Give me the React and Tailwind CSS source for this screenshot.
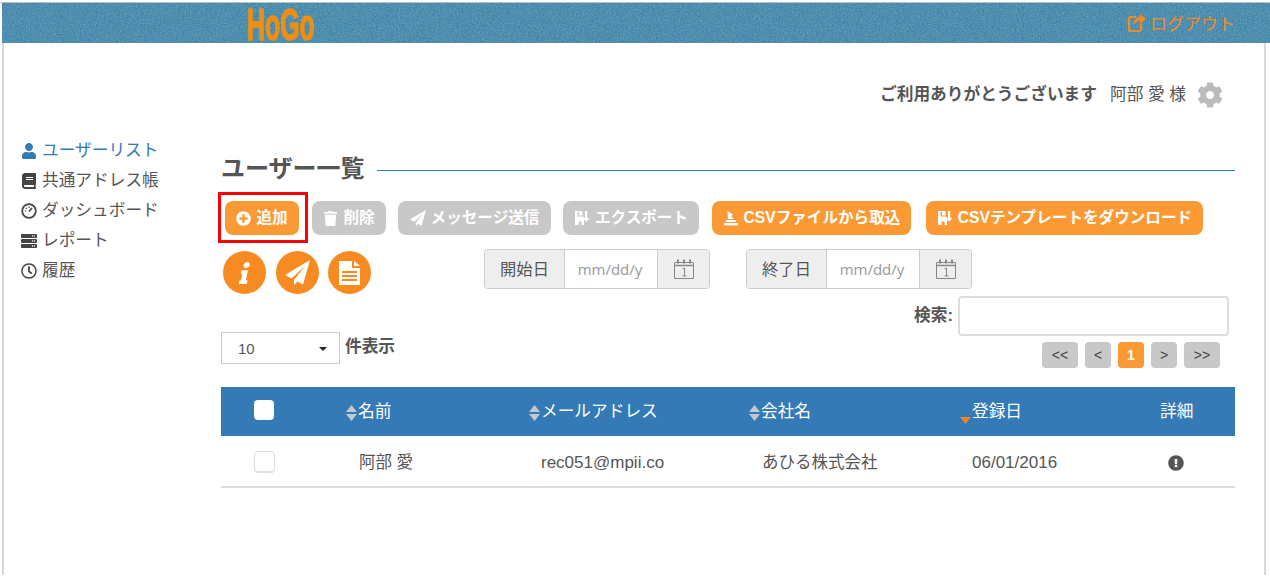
import React from 'react';
import {
    FaBook,
    FaCog,
    FaExclamationCircle,
    FaInfo,
    FaPlusCircle,
    FaRegClock,
    FaServer,
    FaTrash,
    FaUser,
} from 'react-icons/fa';

function Gauge({ className }) {
    return (
        <svg viewBox="0 0 16 16" className={className} fill="none" stroke="currentColor">
            <circle cx="8" cy="8" r="6.8" strokeWidth="1.8" />
            <path d="M8 8.5 L11 5" strokeWidth="1.6" />
            <path d="M4 8h1.2M8 3.8v1.2M5 5l.8.8" strokeWidth="1.2" />
        </svg>
    );
}

function LogoutIcon({ className }) {
    return (
        <svg viewBox="0 0 20 20" className={className}>
            <path d="M14 11v5.500a1.500 1.500 0 0 1-1.500 1.500h-9A1.500 1.500 0 0 1 2 16.500v-11A1.500 1.500 0 0 1 3.500 4H9" fill="none" stroke="currentColor" strokeWidth="2.200" />
            <path d="M13 1l6 5-6 5V8C9.500 8 7.500 9.500 6.500 13 6 8 8.500 4.500 13 4z" fill="currentColor" />
        </svg>
    );
}

function PlaneIcon({ className }) {
    return (
        <svg viewBox="0 0 25 25" className={className} fill="currentColor">
            <path d="M25 0L0 15l6.500 3.500L20 6 9 20v5l3.500-3.500 5.500 3z" />
        </svg>
    );
}

function PageIcon({ className }) {
    return (
        <svg viewBox="0 0 21 24" className={className} fill="currentColor">
            <path d="M0 0h13v7h8v17H0zM3 10v2h15v-2zM3 14v2h15v-2zM3 18v2h15v-2z" fillRule="evenodd" />
            <path d="M15 0l6 5h-6z" />
        </svg>
    );
}

function ExportIcon({ className }) {
    return (
        <svg viewBox="0 0 16 16" className={className} fill="currentColor">
            <path d="M1 1h7.500v4.500H5V1.800H3.600v4.700h5.600L10 7.400V15H7.600v-3.500H4.600V15H1z" />
            <path d="M11 1h2.200v7H15.400l-3.300 4-3-4H11z" />
        </svg>
    );
}

function ImportIcon({ className }) {
    return (
        <svg viewBox="0 0 16 16" className={className} fill="currentColor">
            <path d="M4.500 1 L10 4.500 L8 6 L11 9 L5 9 Z" />
            <rect x="3" y="10" width="10" height="2" />
            <rect x="1" y="13" width="14" height="2.400" />
        </svg>
    );
}

function CalendarIcon() {
    return (
        <svg viewBox="0 0 22 22" className="h-[22px] w-[22px] text-[#888]" fill="none" stroke="currentColor">
            <path d="M1.500 4.500h19v16h-19z" />
            <path d="M1.500 7.500h19" strokeWidth="1.500" />
            <path d="M5 1.500v4M11 1.500v4M17 1.500v4" strokeWidth="2" />
            <path d="M9.500 11l2-1v8M9.500 18h4" />
        </svg>
    );
}

function SortIcon({ active }) {
    if (active) {
        return (
            <svg viewBox="0 0 11 16" className="mr-px inline-block h-4 w-[11px] shrink-0 translate-y-[3px] text-[#f58220]" fill="currentColor">
                <path d="M0 9h11l-5.500 7z" />
            </svg>
        );
    }
    return (
        <svg viewBox="0 0 11 16" className="mr-px inline-block h-4 w-[11px] shrink-0 text-[#c5c9ce]" fill="currentColor">
            <path d="M0 7L5.500 0 11 7zM0 9h11l-5.500 7z" />
        </svg>
    );
}

function ActionButton({ icon, label, color, className }) {
    return (
        <button className={`flex h-[34px] items-center justify-center gap-[5px] rounded-lg text-[15.600px] font-bold text-white ${color} ${className}`}>
            {icon}
            {label}
        </button>
    );
}

function DateGroup({ label, className }) {
    return (
        <div className={`flex h-10 w-[226px] rounded border border-[#ccc] text-[16.300px] ${className}`}>
            <div className="flex w-[79px] items-center justify-center rounded-l bg-[#eee] text-[#555]">{label}</div>
            <div className="flex w-[94px] items-center justify-center border-x border-[#ccc] pr-[2px] font-['Open_Sans'] text-[15px] text-[#999]">mm/dd/y</div>
            <div className="flex flex-1 items-center justify-center rounded-r bg-[#eee]">
                <CalendarIcon />
            </div>
        </div>
    );
}

function PageButton({ label, active, className }) {
    return (
        <button className={`flex h-[26px] items-center justify-center rounded text-[14px] ${active ? 'bg-[#fb9a35] font-bold text-white' : 'bg-[#c8c8c8] text-[#444]'} ${className}`}>
            {label}
        </button>
    );
}

const menu = [
    { icon: <FaUser className="h-4 w-4" />, label: 'ユーザーリスト', color: 'text-[#337ab7]' },
    { icon: <FaBook className="h-4 w-4" />, label: '共通アドレス帳', color: 'text-[#555]' },
    { icon: <Gauge className="h-4 w-4" />, label: 'ダッシュボード', color: 'text-[#555]' },
    { icon: <FaServer className="h-4 w-4" />, label: 'レポート', color: 'text-[#555]' },
    { icon: <FaRegClock className="h-4 w-4" />, label: '履歴', color: 'text-[#555]' },
];

export default function App() {
    return (
        <div className="flex h-[578px] w-[1270px] flex-col overflow-hidden bg-white pt-[2px] font-['Liberation_Sans','Noto_Sans_CJK_JP',sans-serif] text-[#555]">
            <div className="h-px shrink-0 bg-[#bdbdbd]" />
            <header className="relative ml-[2px] flex h-10 shrink-0 items-center bg-[#3a82a8]">
                <svg className="absolute inset-0 h-full w-full" aria-hidden="true">
                    <filter id="grain">
                        <feTurbulence type="fractalNoise" baseFrequency="0.7" numOctaves="3" seed="4" />
                        <feColorMatrix values="0 0 0 0 0.14  0 0 0 0 0.34  0 0 0 0 0.48  1.600 0 0 0 -0.350" />
                    </filter>
                    <rect width="100%" height="100%" filter="url(#grain)" />
                </svg>
                <div className="relative ml-[245px] mt-[4px] w-fit origin-left scale-x-[0.83] scale-y-[1.5] whitespace-nowrap text-[30px] leading-[34px] font-bold text-[#ee8f12] [-webkit-text-stroke:1px_#ee8f12]">HoGo</div>
                <div className="relative ml-auto mr-[35px] mt-[4px] flex items-center gap-[3px] text-[17px] text-[#f58a1f]">
                    <LogoutIcon className="-mt-[5px] h-[20px] w-[20px]" />
                    ログアウト
                </div>
            </header>
            <div className="mb-[3px] ml-[2px] mr-[4px] flex flex-1 flex-col border-x-2 border-[#d8d8d8]">
                <div className="flex h-[93px] shrink-0 items-start justify-end pr-[41px] pt-[37px]">
                    <span className="text-[16.700px] leading-[30px] font-bold">ご利用ありがとうございます</span>
                    <span className="ml-[13px] text-[16.700px] leading-[30px]">阿部 愛 様</span>
                    <FaCog className="ml-[11px] mt-[2px] h-[26px] w-[26px] text-[#bbb]" />
                </div>
                <div className="flex flex-1">
                    <nav className="w-[217px] shrink-0 pl-[17px]">
                        {menu.map((item) => (
                            <div key={item.label} className={`flex h-[30px] items-center gap-[5px] text-[16.700px] ${item.color}`}>
                                <span className={item.label === 'ユーザーリスト' ? 'text-[#337ab7]' : 'text-[#444]'}>{item.icon}</span>
                                {item.label}
                            </div>
                        ))}
                    </nav>
                    <main className="w-[1014px] shrink-0">
                        <div className="mt-4 flex items-center">
                            <h1 className="text-[24px] leading-[34px] font-bold">ユーザー一覧</h1>
                            <div className="ml-3 mt-[3px] h-px flex-1 bg-[#2a86a8]" />
                        </div>
                        <div className="relative mt-[15px] flex h-[34px] pl-1">
                            <div className="absolute -top-[9px] -left-[3px] h-[51px] w-[90px] border-[3.500px] border-[#f00]" />
                            <ActionButton color="bg-[#fb9a35]" className="w-[74px]" label="追加" icon={<FaPlusCircle className="h-[15px] w-[15px]" />} />
                            <ActionButton color="bg-[#c8c8c8]" className="ml-[13px] w-[74px]" label="削除" icon={<FaTrash className="h-[15px] w-[15px]" />} />
                            <ActionButton color="bg-[#c8c8c8]" className="ml-3 w-[153px]" label="メッセージ送信" icon={<PlaneIcon className="h-[16px] w-[16px]" />} />
                            <ActionButton color="bg-[#c8c8c8]" className="ml-3 w-[136px]" label="エクスポート" icon={<ExportIcon className="h-[16px] w-[16px]" />} />
                            <ActionButton color="bg-[#fb9a35]" className="ml-[13px] w-[199px]" label="CSVファイルから取込" icon={<ImportIcon className="h-[16px] w-[16px]" />} />
                            <ActionButton color="bg-[#fb9a35]" className="ml-[15px] w-[277px]" label="CSVテンプレートをダウンロード" icon={<ExportIcon className="h-[16px] w-[16px]" />} />
                        </div>
                        <div className="mt-[14px] flex">
                            <div className="mt-[2px] ml-[2px] flex h-[43px] w-[261px] gap-[9.500px]">
                                <span className="flex h-[43px] w-[43px] items-center justify-center rounded-full bg-[#f78b22] text-white"><FaInfo className="h-[22px] w-[22px] -skew-x-12" /></span>
                                <span className="flex h-[43px] w-[43px] items-center justify-center rounded-full bg-[#f78b22] text-white"><PlaneIcon className="h-[25px] w-[25px]" /></span>
                                <span className="flex h-[43px] w-[43px] items-center justify-center rounded-full bg-[#f78b22] text-white"><PageIcon className="h-[24px] w-[21px]" /></span>
                            </div>
                            <DateGroup label="開始日" />
                            <DateGroup label="終了日" className="ml-9" />
                        </div>
                        <div className="mt-[2px] flex justify-between">
                            <div className="flex items-start pt-[36px]">
                                <div className="flex h-8 w-[119px] items-center justify-between border border-[#ccc] pl-4 pr-[12px] pt-[2px] text-[15px]">
                                    10
                                    <span className="h-0 w-0 border-x-[4px] border-t-[4px] border-x-transparent border-t-[#222]" />
                                </div>
                                <span className="ml-[5px] text-[16.700px] leading-[29px] font-bold">件表示</span>
                            </div>
                            <div className="flex flex-col items-end pr-[6px]">
                                <div className="flex items-center gap-[5px]">
                                    <span className="self-start text-[16.700px] leading-[40px] font-bold">検索:</span>
                                    <div className="h-10 w-[271px] rounded border-2 border-[#ddd]" />
                                </div>
                                <div className="mt-[6px] mr-[9px] flex gap-[7px]">
                                    <PageButton label="<<" className="w-9" />
                                    <PageButton label="<" className="w-[26px]" />
                                    <PageButton label="1" active className="w-[26px]" />
                                    <PageButton label=">" className="w-[26px]" />
                                    <PageButton label=">>" className="w-9" />
                                </div>
                            </div>
                        </div>
                        <table className="mt-[19px] w-full table-fixed border-b-2 border-[#ddd] text-left">
                            <colgroup>
                                <col className="w-[125px]" />
                                <col className="w-[183px]" />
                                <col className="w-[220px]" />
                                <col className="w-[211px]" />
                                <col className="w-[170px]" />
                                <col />
                            </colgroup>
                            <thead>
                                <tr className="h-[49px] bg-[#337ab7] text-[16.700px] font-normal text-white">
                                    <th className="pl-[33px]"><div className="-mt-1 h-5 w-5 rounded bg-white" /></th>
                                    <th className="font-normal"><SortIcon />名前</th>
                                    <th className="font-normal"><SortIcon />メールアドレス</th>
                                    <th className="font-normal"><SortIcon />会社名</th>
                                    <th className="font-normal"><SortIcon active />登録日</th>
                                    <th className="pl-[30px] font-normal">詳細</th>
                                </tr>
                            </thead>
                            <tbody>
                                <tr className="h-[51px] text-[17px]">
                                    <td className="pl-[33px]"><div className="h-[21px] w-[21px] rounded border border-[#ddd] shadow-[0_1px_1px_#ddd]" /></td>
                                    <td className="pl-[13px] pt-[3px] text-[16.500px]">阿部 愛</td>
                                    <td className="pl-[12px] pt-[3px]">rec051@mpii.co</td>
                                    <td className="pl-[13px] pt-[3px] text-[16.500px]">あひる株式会社</td>
                                    <td className="pl-[12px] pt-[3px]">06/01/2016</td>
                                    <td className="pl-[38px] pt-[3px]"><FaExclamationCircle className="h-4 w-4 text-[#555]" /></td>
                                </tr>
                            </tbody>
                        </table>
                    </main>
                </div>
            </div>
        </div>
    );
}
